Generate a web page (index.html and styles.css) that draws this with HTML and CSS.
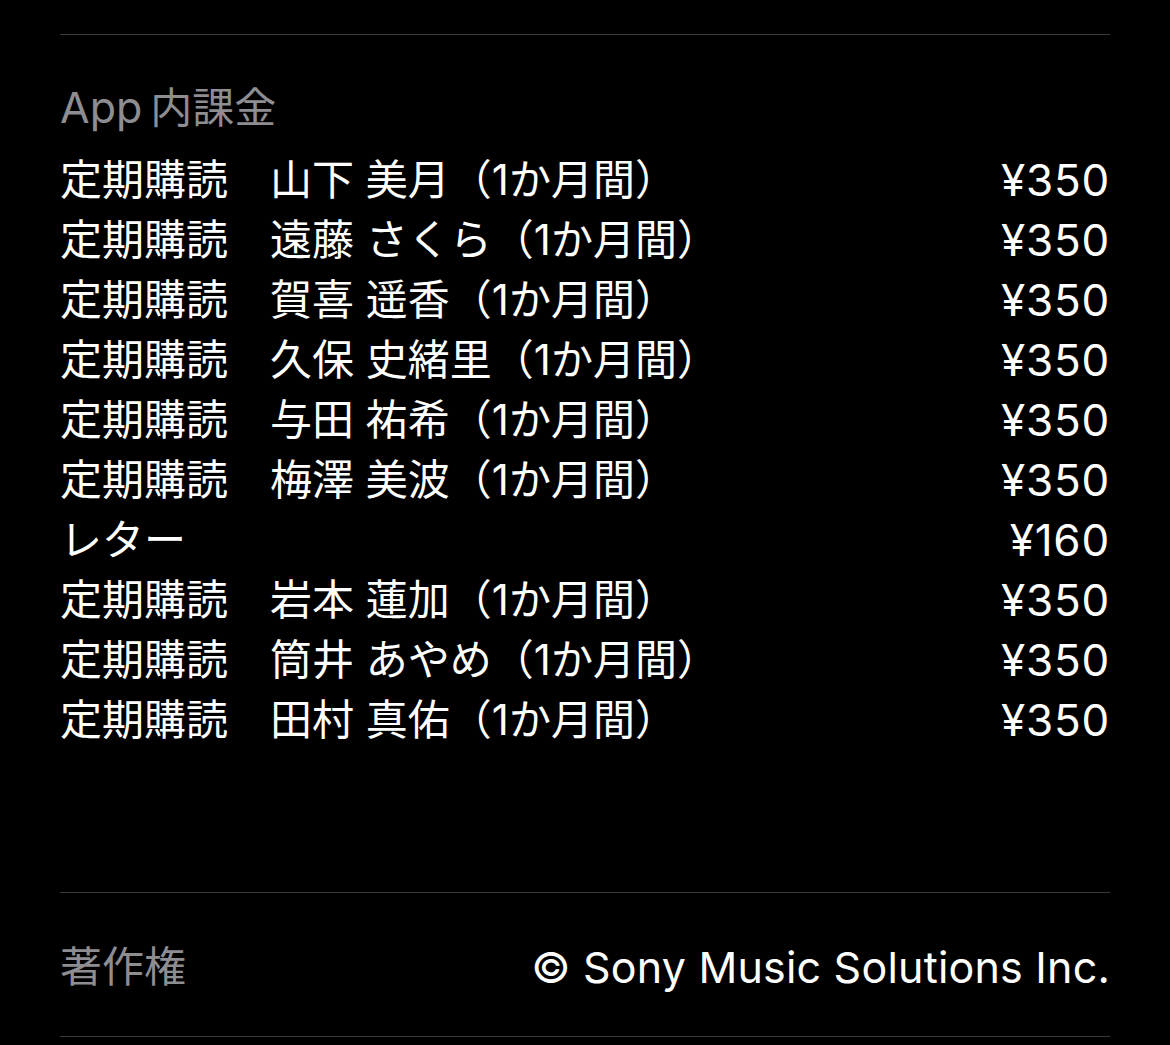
FILE: index.html
```html
<!DOCTYPE html>
<html lang="ja">
  <head>
    <meta charset="UTF-8" />
    <meta name="viewport" content="width=device-width, initial-scale=1.0" />
    <title>App内課金</title>
    <link rel="stylesheet" href="styles.css">
  </head>
  <body>
    <div class="info">
      <section class="purchases">
        <h3 class="label"><span class="latin">App</span>内課金</h3>
        <ul class="items">
          <li class="item"><span class="name">定期購読　山下 美月（1か月間）</span><span class="price">¥350</span></li>
          <li class="item"><span class="name">定期購読　遠藤 さくら（1か月間）</span><span class="price">¥350</span></li>
          <li class="item"><span class="name">定期購読　賀喜 遥香（1か月間）</span><span class="price">¥350</span></li>
          <li class="item"><span class="name">定期購読　久保 史緒里（1か月間）</span><span class="price">¥350</span></li>
          <li class="item"><span class="name">定期購読　与田 祐希（1か月間）</span><span class="price">¥350</span></li>
          <li class="item"><span class="name">定期購読　梅澤 美波（1か月間）</span><span class="price">¥350</span></li>
          <li class="item"><span class="name">レター</span><span class="price">¥160</span></li>
          <li class="item"><span class="name">定期購読　岩本 蓮加（1か月間）</span><span class="price">¥350</span></li>
          <li class="item"><span class="name">定期購読　筒井 あやめ（1か月間）</span><span class="price">¥350</span></li>
          <li class="item"><span class="name">定期購読　田村 真佑（1か月間）</span><span class="price">¥350</span></li>
        </ul>
      </section>
      <section class="copyright">
        <span class="label">著作権</span>
        <span class="value">© Sony Music Solutions Inc.</span>
      </section>
    </div>
  </body>
</html>
```

FILE: styles.css
```css
body {
  margin: 0;
  padding: 0;
  background: #000;
  color: #fff;
  font-family: "Inter", "Noto Sans CJK JP", sans-serif;
  font-size: 42px;
}

.info {
  padding: 34px 60px 0;
}

.purchases {
  border-top: 1px solid #3a3a3c;
  padding: 43px 0 142px;
}

.label {
  color: #8d8d92;
  font-weight: normal;
  font-size: 42px;
  line-height: 60px;
  margin: 0;
}

.latin {
  font-size: 43px;
  line-height: 1;
  margin-right: 8px;
}

.items {
  list-style: none;
  margin: 12px 0 0;
  padding: 0;
}

.item {
  display: flex;
  justify-content: space-between;
  align-items: center;
  line-height: 60px;
  height: 60px;
}

.price {
  font-size: 44px;
  letter-spacing: 0.8px;
}

.copyright {
  border-top: 1px solid #3a3a3c;
  border-bottom: 1px solid #3a3a3c;
  display: flex;
  justify-content: space-between;
  align-items: center;
  line-height: 60px;
  padding: 44px 0 39px;
}

.copyright .value {
  font-size: 43px;
  letter-spacing: 0.2px;
}
```
